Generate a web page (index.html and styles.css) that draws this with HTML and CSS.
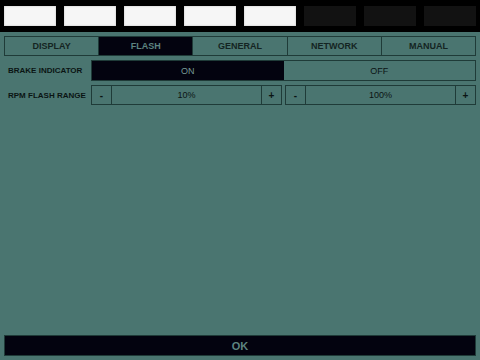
FILE: index.html
```html
<!DOCTYPE html>
<html lang="en">
<head>
  <meta charset="UTF-8">
  <meta name="viewport" content="width=device-width, initial-scale=1.0">
  <title>Flash Settings</title>
  <link rel="stylesheet" href="styles.css">
</head>
<body>
  <div class="screen">
    <div class="lights">
      <div class="light on"></div>
      <div class="light on"></div>
      <div class="light on"></div>
      <div class="light on"></div>
      <div class="light on"></div>
      <div class="light"></div>
      <div class="light"></div>
      <div class="light"></div>
    </div>

    <nav class="tabs">
      <div class="tab">DISPLAY</div>
      <div class="tab active">FLASH</div>
      <div class="tab">GENERAL</div>
      <div class="tab">NETWORK</div>
      <div class="tab">MANUAL</div>
    </nav>

    <div class="settings">
      <div class="row">
        <div class="label">BRAKE INDICATOR</div>
        <div class="toggle">
          <div class="option active">ON</div>
          <div class="option">OFF</div>
        </div>
      </div>
      <div class="row">
        <div class="label">RPM FLASH RANGE</div>
        <div class="steppers">
          <div class="stepper">
            <div class="step">-</div>
            <div class="value">10%</div>
            <div class="step">+</div>
          </div>
          <div class="stepper">
            <div class="step">-</div>
            <div class="value">100%</div>
            <div class="step">+</div>
          </div>
        </div>
      </div>
    </div>

    <div class="ok">OK</div>
  </div>
</body>
</html>
```

FILE: styles.css
```css
body {
  margin: 0;
  padding: 0;
  background-color: #4a7570;
  font-family: "Liberation Sans", Arial, sans-serif;
  overflow: hidden;
}
.screen {
  display: flex;
  flex-direction: column;
  height: 360px;
}
.lights {
  background-color: #000;
  display: flex;
  gap: 8px;
  padding: 6px 4px;
}
.light {
  flex: 1;
  height: 20px;
  background-color: #121212;
}
.light.on {
  background-color: #f6f6f6;
  box-shadow: inset 0 0 2px rgba(0, 0, 0, 0.25);
}
.tabs {
  display: flex;
  margin: 4px 4px 0;
  border: 1px solid #1f3b38;
  height: 18px;
}
.tab {
  flex: 1;
  display: flex;
  align-items: center;
  justify-content: center;
  font-size: 9px;
  font-weight: bold;
  color: #142422;
  border-left: 1px solid #1f3b38;
}
.tab:first-child {
  border-left: none;
}
.tab.active {
  background-color: #03030f;
  color: #5d8480;
}
.settings {
  display: flex;
  flex-direction: column;
  gap: 4px;
  margin-top: 4px;
  flex: 1;
}
.row {
  display: flex;
  padding-right: 4px;
}
.label {
  width: 83px;
  padding-left: 8px;
  display: flex;
  align-items: center;
  font-size: 8px;
  font-weight: bold;
  color: #0a1413;
}
.toggle {
  flex: 1;
  display: flex;
  height: 19px;
  border: 1px solid #1f3b38;
}
.option {
  flex: 1;
  display: flex;
  align-items: center;
  justify-content: center;
  font-size: 9px;
  color: #0a1413;
}
.option.active {
  background-color: #03030f;
  color: #789a96;
}
.steppers {
  flex: 1;
  display: flex;
  gap: 3px;
}
.stepper {
  flex: 1;
  display: flex;
  height: 18px;
  border: 1px solid #1f3b38;
}
.step {
  width: 19px;
  display: flex;
  align-items: center;
  justify-content: center;
  font-size: 10px;
  font-weight: bold;
  color: #0a1413;
}
.step:first-child {
  border-right: 1px solid #1f3b38;
}
.step:last-child {
  border-left: 1px solid #1f3b38;
}
.value {
  flex: 1;
  display: flex;
  align-items: center;
  justify-content: center;
  font-size: 9px;
  color: #0a1413;
}
.ok {
  margin: 0 4px 4px;
  height: 19px;
  border: 1px solid #1f3b38;
  background-color: #03030f;
  color: #5d8480;
  display: flex;
  align-items: center;
  justify-content: center;
  font-size: 11px;
  font-weight: bold;
}
```
